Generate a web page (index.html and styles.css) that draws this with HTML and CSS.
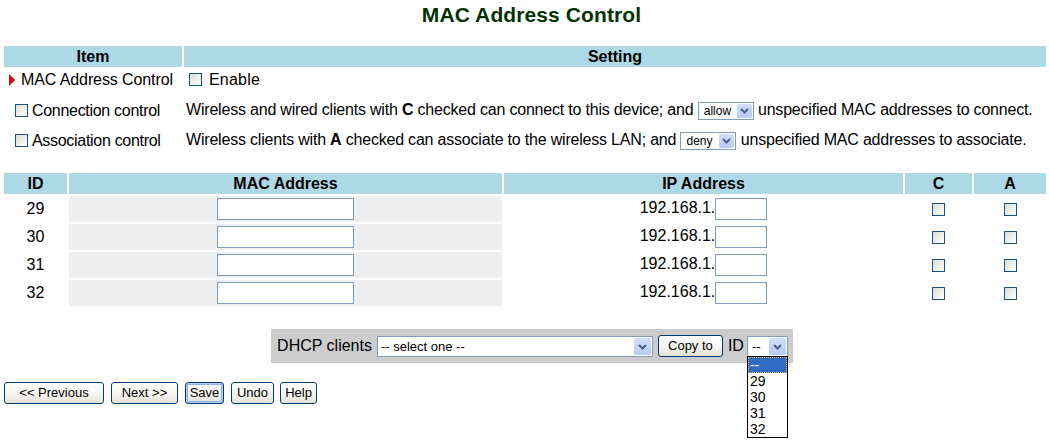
FILE: index.html
```html
<!DOCTYPE html>
<html lang="en">
<head>
<meta charset="utf-8">
<title>MAC Address Control</title>
<link rel="stylesheet" href="styles.css">
</head>
<body>
<div class="page">
  <h1 class="title">MAC Address Control</h1>

  <table class="grid settings">
    <colgroup><col class="col-item"><col></colgroup>
    <thead>
      <tr><th>Item</th><th>Setting</th></tr>
    </thead>
    <tbody>
      <tr class="r1">
        <td class="item item-main"><span class="arrow"></span>MAC Address Control</td>
        <td class="setting setting-main"><span class="cb cb-gap"></span>Enable</td>
      </tr>
      <tr class="r2">
        <td class="item item-sub"><span class="cb cb-label"></span>Connection control</td>
        <td class="setting">Wireless and wired clients with <b>C</b> checked can connect to this device; and <span class="sel sel-small"><span class="sel-text">allow</span><span class="sel-btn"><svg viewBox="0 0 15 15" width="15" height="15"><polyline points="4,6 7.5,9.5 11,6" fill="none" stroke="#4d6185" stroke-width="2"/></svg></span></span> unspecified MAC addresses to connect.</td>
      </tr>
      <tr class="r3">
        <td class="item item-sub"><span class="cb cb-label"></span>Association control</td>
        <td class="setting">Wireless clients with <b>A</b> checked can associate to the wireless LAN; and <span class="sel sel-small"><span class="sel-text">deny</span><span class="sel-btn"><svg viewBox="0 0 15 15" width="15" height="15"><polyline points="4,6 7.5,9.5 11,6" fill="none" stroke="#4d6185" stroke-width="2"/></svg></span></span> unspecified MAC addresses to associate.</td>
      </tr>
    </tbody>
  </table>

  <table class="grid list">
    <colgroup>
      <col class="col-id"><col class="col-mac"><col class="col-ip"><col class="col-c"><col>
    </colgroup>
    <thead>
      <tr><th>ID</th><th>MAC Address</th><th>IP Address</th><th>C</th><th>A</th></tr>
    </thead>
    <tbody>
      <tr>
        <td class="num">29</td>
        <td class="mac"><input class="txt txt-mac" type="text"></td>
        <td class="ip">192.168.1.<input class="txt txt-ip" type="text"></td>
        <td class="chk"><span class="cb"></span></td>
        <td class="chk"><span class="cb"></span></td>
      </tr>
      <tr>
        <td class="num">30</td>
        <td class="mac"><input class="txt txt-mac" type="text"></td>
        <td class="ip">192.168.1.<input class="txt txt-ip" type="text"></td>
        <td class="chk"><span class="cb"></span></td>
        <td class="chk"><span class="cb"></span></td>
      </tr>
      <tr>
        <td class="num">31</td>
        <td class="mac"><input class="txt txt-mac" type="text"></td>
        <td class="ip">192.168.1.<input class="txt txt-ip" type="text"></td>
        <td class="chk"><span class="cb"></span></td>
        <td class="chk"><span class="cb"></span></td>
      </tr>
      <tr>
        <td class="num">32</td>
        <td class="mac"><input class="txt txt-mac" type="text"></td>
        <td class="ip">192.168.1.<input class="txt txt-ip" type="text"></td>
        <td class="chk"><span class="cb"></span></td>
        <td class="chk"><span class="cb"></span></td>
      </tr>
    </tbody>
  </table>

  <div class="dhcp-wrap">
    <div class="dhcp">
      <span class="dhcp-label">DHCP clients</span>
      <span class="sel sel-clients"><span class="sel-text">-- select one --</span><span class="sel-btn sel-btn-big"><svg viewBox="0 0 17 17" width="17" height="17"><polyline points="5,7 8.5,10.5 12,7" fill="none" stroke="#4d6185" stroke-width="2"/></svg></span></span>
      <button class="btn btn-copy" type="button">Copy to</button>
      <span class="dhcp-id">ID</span>
      <span class="sel sel-id"><span class="sel-text">--</span><span class="sel-btn sel-btn-big"><svg viewBox="0 0 17 17" width="17" height="17"><polyline points="5,7 8.5,10.5 12,7" fill="none" stroke="#4d6185" stroke-width="2"/></svg></span>
        <span class="droplist">
          <span class="opt opt-on">--</span>
          <span class="opt">29</span>
          <span class="opt">30</span>
          <span class="opt">31</span>
          <span class="opt">32</span>
        </span>
      </span>
    </div>
  </div>

  <div class="actions">
    <button class="btn btn-prev" type="button">&lt;&lt; Previous</button>
    <button class="btn btn-next" type="button">Next &gt;&gt;</button>
    <button class="btn btn-save btn-default" type="button">Save</button>
    <button class="btn btn-undo" type="button">Undo</button>
    <button class="btn btn-help" type="button">Help</button>
  </div>
</div>
</body>
</html>
```
FILE: styles.css
```css
* { box-sizing: border-box; }
html, body { margin: 0; padding: 0; background: #fff; }
body {
  font-family: "Liberation Sans", Arial, sans-serif;
  font-size: 16px;
  color: #000;
  min-height: 443px;
}
.page { padding: 0 1px 0 2px; min-height: 443px; }

.title {
  margin: 0;
  height: 44px;
  padding-left: 13px;
  text-align: center;
  font-size: 21px;
  font-weight: bold;
  line-height: 30px;
  color: #003300;
  letter-spacing: 0.1px;
}

.grid {
  width: 100%;
  table-layout: fixed;
  border-collapse: separate;
  border-spacing: 2px;
}
.grid th {
  background: #add8e6;
  height: 21px;
  padding: 0;
  line-height: 21px;
  font-weight: bold;
  text-align: center;
}
.grid td { padding: 0; vertical-align: middle; white-space: nowrap; }

.col-item { width: 178px; }
.settings .r1 td { height: 22px; }
.settings .r2 td { height: 35px; }
.settings .r3 td { height: 21px; }
.settings td.item-main { padding-left: 5px; letter-spacing: -0.1px; }
.settings td.item-sub { padding-left: 11px; letter-spacing: -0.3px; }
.settings td.setting { padding-left: 2px; letter-spacing: -0.2px; }
.settings td.setting-main { padding-left: 5px; letter-spacing: 0.2px; }

.arrow {
  display: inline-block;
  width: 0;
  height: 0;
  border-top: 6px solid transparent;
  border-bottom: 6px solid transparent;
  border-left: 6px solid #e00000;
  margin-right: 6px;
  vertical-align: -1px;
}

.cb {
  display: inline-block;
  width: 13px;
  height: 13px;
  border: 1px solid #1c5180;
  background: linear-gradient(135deg, #dcdcd7 0%, #f4f4f2 70%, #ffffff 100%);
  vertical-align: middle;
}
.cb-gap { margin-right: 7px; vertical-align: -1px; }
.cb-label { margin-right: 4px; vertical-align: -1px; }

.sel {
  display: inline-flex;
  align-items: stretch;
  position: relative;
  border: 1px solid #7f9db9;
  background: #fff;
  vertical-align: middle;
  white-space: nowrap;
  text-align: left;
  letter-spacing: 0;
}
.sel-text { flex: 1; overflow: hidden; }
.sel-btn {
  display: flex;
  align-items: center;
  justify-content: center;
  margin: 1px;
  border-radius: 2px;
  background: linear-gradient(#d0defd, #b6cbf7);
}
.sel-small { width: 56px; height: 18px; font-size: 12px; line-height: 16px; }
.sel-small .sel-text { padding-left: 5px; }
.sel-small .sel-btn { width: 15px; }

.list { margin-top: 18px; }
.col-id { width: 63px; }
.col-mac { width: 433px; }
.col-ip { width: 399px; }
.col-c { width: 67px; }
.list td { height: 26px; }
.num { text-align: center; }
.mac { background: #efefef; text-align: center; }
.ip { text-align: center; }
.chk { text-align: center; }
.txt {
  border: 1px solid #7f9db9;
  background: #fff;
  height: 22px;
  padding: 0;
  margin: 0;
  vertical-align: middle;
  font: inherit;
}
.txt-mac { width: 137px; }
.txt-ip { width: 52px; }

.dhcp-wrap { margin-top: 21px; padding-left: 14px; text-align: center; }
.dhcp {
  display: inline-flex;
  align-items: center;
  height: 34px;
  padding: 0 5px 0 6px;
  background: #cccccc;
}
.dhcp-label { margin-right: 5px; }
.sel-clients { width: 276px; height: 21px; font-size: 13px; line-height: 19px; margin-right: 5px; }
.sel-clients .sel-text { padding-left: 3px; }
.sel-btn-big { width: 17px; }
.dhcp-id { margin-right: 3px; }
.sel-id { width: 41px; height: 21px; font-size: 13px; line-height: 19px; }
.sel-id .sel-text { padding-left: 4px; }

.droplist {
  position: absolute;
  left: -1px;
  top: 100%;
  width: 41px;
  border: 1px solid #000;
  background: #fff;
  display: flex;
  flex-direction: column;
  z-index: 5;
}
.opt {
  display: block;
  height: 16px;
  line-height: 16px;
  padding-left: 2px;
  font-size: 14px;
  color: #000;
}
.opt-on {
  background: #316ac5;
  color: #fff;
  outline: 1px dotted #e8c060;
  outline-offset: -1px;
}

.btn {
  height: 22px;
  padding: 0;
  border: 1px solid #003c74;
  border-radius: 3px;
  background: linear-gradient(#ffffff 0%, #f4f3ee 60%, #e3e1d6 100%);
  font-family: "Liberation Sans", Arial, sans-serif;
  font-size: 13px;
  color: #000;
  line-height: 20px;
  text-align: center;
}
.btn-copy { width: 65px; margin-right: 5px; }
.btn-prev { width: 100px; }
.btn-next { width: 67px; }
.btn-save { width: 39px; }
.btn-undo { width: 43px; }
.btn-help { width: 37px; margin-left: -1px; }
.btn-default { box-shadow: inset 0 0 0 1px #b6cdf5, inset 0 0 0 2px #8eb0ee; }

.actions {
  display: flex;
  gap: 7px;
  margin-top: 19px;
  padding-left: 2px;
}
```
